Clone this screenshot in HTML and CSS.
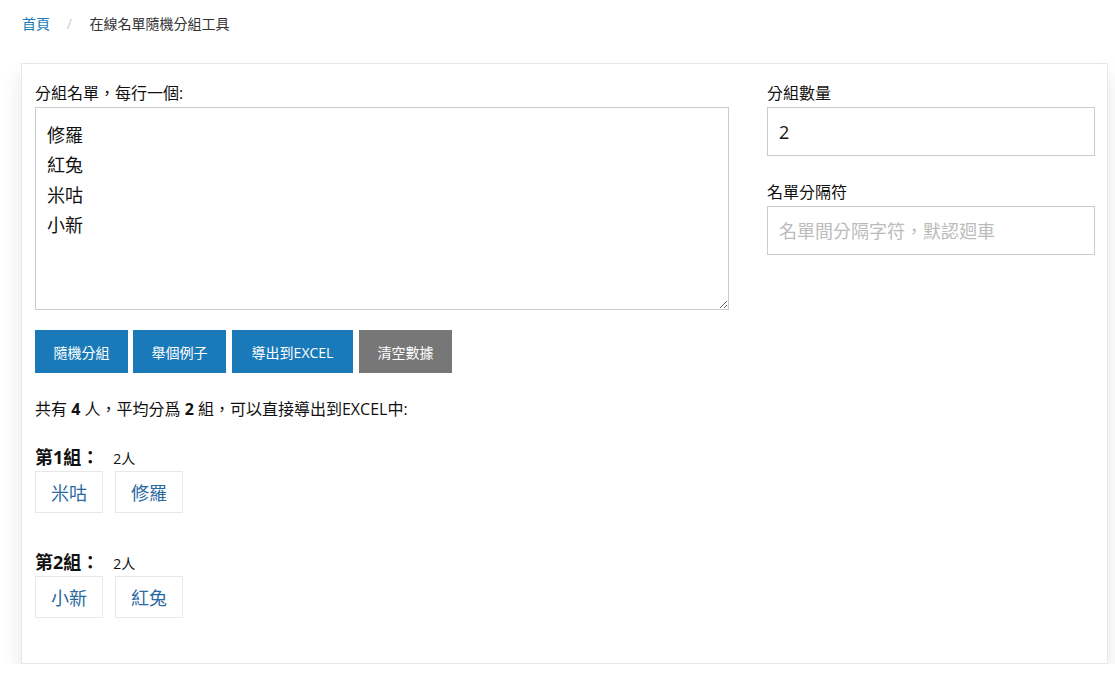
FILE: index.html
```html
<!DOCTYPE html>
<html>
<head>
    <meta charset="UTF-8">
    <title>在線名單隨機分組工具</title>
    <link rel="stylesheet" href="styles.css">
</head>
<body>
<div class="breadcrumb">
    <a href="#">首頁</a>
    <span class="sep">/</span>
    <span class="current">在線名單隨機分組工具</span>
</div>

<div class="panel">
    <div class="main">
        <div class="left">
            <label class="label">分組名單，每行一個:</label>
            <textarea class="names">修羅
紅兔
米咕
小新</textarea>
            <div class="buttons">
                <button class="btn">隨機分組</button>
                <button class="btn">舉個例子</button>
                <button class="btn btn-wide">導出到EXCEL</button>
                <button class="btn btn-grey">清空數據</button>
            </div>
            <p class="summary">共有 <b>4</b> 人，平均分爲 <b>2</b> 組，可以直接導出到EXCEL中:</p>

            <div class="group">
                <div class="group-title"><b>第1組：</b><span class="count">2人</span></div>
                <div class="tags">
                    <span class="tag">米咕</span>
                    <span class="tag">修羅</span>
                </div>
            </div>
            <div class="group">
                <div class="group-title"><b>第2組：</b><span class="count">2人</span></div>
                <div class="tags">
                    <span class="tag">小新</span>
                    <span class="tag">紅兔</span>
                </div>
            </div>
        </div>

        <div class="right">
            <label class="label">分組數量</label>
            <input class="field" type="text" value="2">
            <label class="label second">名單分隔符</label>
            <input class="field" type="text" placeholder="名單間分隔字符，默認廻車">
        </div>
    </div>
</div>
</body>
</html>
```

FILE: styles.css
```css
body {
    margin: 0;
    background-color: #fff;
    font-family: "Open Sans", "Noto Sans CJK TC", sans-serif;
    color: #111;
}
.breadcrumb {
    padding: 13px 22px 0;
    height: 63px;
    box-sizing: border-box;
    font-size: 14px;
    line-height: 22px;
}
.breadcrumb a {
    color: #1a7ab9;
    text-decoration: none;
}
.breadcrumb .sep {
    color: #ccc;
    margin: 0 14px 0 13px;
}
.breadcrumb .current {
    color: #333;
}
.panel {
    margin: 0 7px 0 21px;
    padding: 17px 12px 45px 13px;
    border: 1px solid #e8e8e8;
    background-color: #fff;
    box-shadow: 0 12px 20px rgba(0,0,0,0.1);
}
.main {
    display: grid;
    grid-template-columns: 694px 328px;
    column-gap: 38px;
}
.label {
    display: block;
    font-size: 16px;
    line-height: 24px;
    margin-bottom: 2px;
}
.label.second {
    margin-top: 24px;
}
.names {
    display: block;
    width: 694px;
    height: 203px;
    box-sizing: border-box;
    padding: 12px 11px;
    border: 1px solid #ccc;
    font-family: inherit;
    font-size: 18px;
    line-height: 30px;
    color: #111;
    resize: vertical;
    outline: none;
}
.field {
    display: block;
    width: 100%;
    height: 49px;
    box-sizing: border-box;
    padding: 0 11px;
    border: 1px solid #ccc;
    font-family: inherit;
    font-size: 18px;
    color: #111;
    outline: none;
}
.field::placeholder {
    color: #bbb;
}
.buttons {
    display: flex;
    gap: 5px;
    margin-top: 20px;
}
.btn {
    width: 93px;
    height: 43px;
    padding: 0;
    border: none;
    background-color: #1a7ab9;
    color: #fff;
    font-family: inherit;
    font-size: 14px;
    cursor: pointer;
}
.btn-wide {
    width: 121px;
    margin-left: 1px;
}
.btn-grey {
    background-color: #777;
    margin-left: 1px;
}
.summary {
    margin: 25px 0 0;
    font-size: 16px;
    line-height: 22px;
}
.group {
    margin-top: 25px;
}
.group + .group {
    margin-top: 37px;
}
.group-title {
    font-size: 18px;
    line-height: 24px;
    margin-bottom: 0;
}
.group-title .count {
    font-size: 14px;
    margin-left: 14px;
}
.tags {
    display: flex;
    gap: 12px;
}
.tag {
    display: flex;
    align-items: center;
    height: 42px;
    box-sizing: border-box;
    padding: 0 15px;
    border: 1px solid #e8e8e8;
    color: #2a6aa3;
    font-size: 18px;
}
```
